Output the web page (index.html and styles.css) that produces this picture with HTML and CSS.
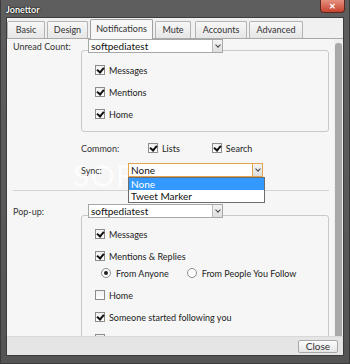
FILE: index.html
```html
<!DOCTYPE html>
<html lang="en">
<head>
  <meta charset="UTF-8">
  <title>Jonettor – Notifications</title>
  <link rel="stylesheet" href="styles.css">
</head>
<body>

<div class="window">
  <div class="titlebar">
    <span class="title">Jonettor</span>
    <span class="close-x">✕</span>
  </div>

  <div class="frame">
    <div class="tabs">
      <span class="tab tab-basic">Basic</span>
      <span class="tab tab-design">Design</span>
      <span class="tab tab-notif active">Notifications</span>
      <span class="tab tab-mute">Mute</span>
      <span class="tab tab-accounts">Accounts</span>
      <span class="tab tab-advanced">Advanced</span>
    </div>

    <div class="panel">
      <div class="scroll">

        <div class="watermark">SOFTPEDIA<sup>®</sup></div>

        <div class="row">
          <span class="label">Unread Count:</span>
          <div class="select"><span class="value">softpediatest</span><span class="arrow"></span></div>
        </div>
        <div class="group group-unread">
          <div class="item"><span class="cb checked"></span>Messages</div>
          <div class="item"><span class="cb checked"></span>Mentions</div>
          <div class="item"><span class="cb checked"></span>Home</div>
        </div>

        <div class="row sub common">
          <span class="label short">Common:</span>
          <span class="inline"><span class="cb checked"></span>Lists</span>
          <span class="inline"><span class="cb checked"></span>Search</span>
        </div>

        <div class="row sub sync">
          <span class="label tiny">Sync:</span>
          <div class="select focused">
            <span class="value">None</span><span class="arrow"></span>
            <div class="droplist">
              <div class="opt selected">None</div>
              <div class="opt">Tweet Marker</div>
            </div>
          </div>
        </div>

        <div class="separator"></div>

        <div class="row">
          <span class="label">Pop-up:</span>
          <div class="select"><span class="value">softpediatest</span><span class="arrow"></span></div>
        </div>
        <div class="group group-popup">
          <div class="item"><span class="cb checked"></span>Messages</div>
          <div class="item"><span class="cb checked"></span>Mentions &amp; Replies</div>
          <div class="radios">
            <span class="inline radio-a"><span class="rb on"></span>From Anyone</span>
            <span class="inline"><span class="rb"></span>From People You Follow</span>
          </div>
          <div class="item"><span class="cb"></span>Home</div>
          <div class="item"><span class="cb checked"></span>Someone started following you</div>
          <div class="item"><span class="cb checked"></span>Your tweet has been retweeted or favorited</div>
        </div>
      </div>
      <div class="scrollbar"><div class="thumb"></div></div>
    </div>

    <div class="footer">
      <span class="button">Close</span>
    </div>
  </div>
</div>

</body>
</html>
```

FILE: styles.css
```css
body {
  margin: 0;
  font-family: Lato, "Open Sans", sans-serif;
  font-size: 9px;
  color: #222;
}
.window {
  width: 350px;
  height: 364px;
  box-sizing: border-box;
  padding: 0 5px 7px 5px;
  background: linear-gradient(to bottom, #5e5e5e, #545454);
  display: flex;
  flex-direction: column;
  border: 1px solid #3a3a3a;
  border-top: none;
}
.titlebar {
  height: 17px;
  flex: none;
  display: flex;
  align-items: flex-start;
  justify-content: space-between;
}
.title {
  margin-top: 4px;
  color: #fff;
  font-weight: bold;
  font-size: 9px;
  text-shadow: 0 0 2px #000, 0 0 1px #000;
}
.close-x {
  width: 25px;
  height: 13px;
  margin-right: -1px;
  border-radius: 0 0 4px 4px;
  background: linear-gradient(to bottom, #e6907f, #c8432f);
  border: 1px solid #5a2a22;
  border-top: none;
  color: #fff;
  font-size: 8px;
  font-weight: bold;
  text-align: center;
  line-height: 12px;
  box-sizing: border-box;
}
.frame {
  flex: 1;
  display: flex;
  flex-direction: column;
  border: 1px solid #3c3c3c;
  background: #f0f0f0;
  min-height: 0;
}

/* tabs */
.tabs {
  height: 20px;
  flex: none;
  display: flex;
  align-items: flex-end;
  border-bottom: 1px solid #a9a9a9;
  background: #f0f0f0;
}
.tab {
  height: 17px;
  box-sizing: border-box;
  margin-right: 2px;
  border: 1px solid #b3b3b3;
  border-bottom: none;
  border-radius: 2px 2px 0 0;
  background: linear-gradient(to bottom, #f7f7f7, #e6e6e6);
  color: #333;
  text-align: center;
  line-height: 16px;
}
.tab-basic { width: 38px; }
.tab-design { width: 41px; }
.tab-notif { width: 63px; }
.tab-mute { width: 36px; }
.tab-accounts { width: 52px; margin-left: 2px; }
.tab-advanced { width: 54px; }
.tab.active {
  height: 20px;
  background: #f7f7f7;
  margin-bottom: -1px;
  border-color: #a0a0a0;
  line-height: 18px;
}

/* panel */
.panel {
  flex: 1;
  display: flex;
  min-height: 0;
  background: #f6f6f6;
}
.scroll {
  flex: 1;
  overflow: hidden;
  position: relative;
  padding: 0 0 0 6px;
}
.scrollbar {
  width: 9px;
  flex: none;
  background: #efefef;
  padding: 4px 1px 0 0;
  box-sizing: border-box;
}
.thumb {
  height: 100%;
  background: #a9a9a9;
  border-radius: 3px 3px 0 0;
  margin-left: 1px;
}

.row {
  display: flex;
  align-items: center;
  height: 14px;
  position: relative;
  z-index: 1;
}
.label {
  width: 75px;
  flex: none;
  color: #333;
}
.sub { margin-left: 68px; }
.common { margin-top: 9px; }
.sync { margin-top: 8px; z-index: 2; }
.label.short { width: 67px; }
.label.tiny { width: 47px; }

.select {
  position: relative;
  width: 135px;
  height: 14px;
  box-sizing: border-box;
  border: 1px solid #a7a7a7;
  background: #fff;
  display: flex;
  align-items: center;
  justify-content: space-between;
  font-size: 10px;
}
.select .value { padding-left: 2px; color: #111; }
.select .arrow {
  width: 10px;
  height: 12px;
  box-sizing: border-box;
  border-left: 1px solid #b9b9b9;
  background: linear-gradient(to bottom, #f4f4f4, #dedede);
  position: relative;
}
.select .arrow::after {
  content: "";
  position: absolute;
  left: 3px;
  top: 3px;
  width: 3px;
  height: 3px;
  border-right: 1px solid #444;
  border-bottom: 1px solid #444;
  transform: rotate(45deg);
}
.select.focused { border-color: #e3a34f; }
.select.focused .arrow { border-left-color: #e3a34f; }
.droplist {
  position: absolute;
  left: -1px;
  top: 13px;
  width: 135px;
  border: 1px solid #6d6d6d;
  background: #fff;
}
.opt {
  height: 12px;
  line-height: 12px;
  padding-left: 2px;
  color: #111;
}
.opt.selected {
  background: #3399ff;
  color: #fff;
}

.group {
  position: relative;
  margin-left: 68px;
  width: 248px;
  box-sizing: border-box;
  border: 1px solid #c9c9c9;
  border-radius: 3px;
  padding-left: 13px;
}
.group-unread {
  margin-top: -3px;
  height: 82px;
  padding-top: 8px;
}
.group-popup {
  margin-top: -3px;
  padding-top: 7px;
  height: 200px;
}
.item {
  height: 22px;
  display: flex;
  align-items: center;
  white-space: nowrap;
}
.inline {
  display: inline-flex;
  align-items: center;
  margin-right: 32px;
  white-space: nowrap;
  flex: none;
}
.radios {
  height: 12px;
  margin-bottom: 5px;
  display: flex;
  align-items: center;
  padding-left: 6px;
  white-space: nowrap;
}
.radio-a { margin-right: 18px; }

.cb {
  width: 10px;
  height: 10px;
  box-sizing: border-box;
  border: 1px solid #8c8c8c;
  background: linear-gradient(to bottom, #f0f0f0, #fff);
  margin-right: 4px;
  position: relative;
  flex: none;
}
.cb.checked::after {
  content: "";
  position: absolute;
  left: 2px;
  top: 0;
  width: 3px;
  height: 5px;
  border-right: 2px solid #111;
  border-bottom: 2px solid #111;
  transform: rotate(40deg);
}
.rb {
  width: 10px;
  height: 10px;
  box-sizing: border-box;
  border: 1px solid #8c8c8c;
  border-radius: 50%;
  background: #fdfdfd;
  margin-right: 5px;
  position: relative;
  flex: none;
}
.rb.on::after {
  content: "";
  position: absolute;
  left: 2px;
  top: 2px;
  width: 4px;
  height: 4px;
  border-radius: 50%;
  background: #222;
}

.separator {
  height: 1px;
  background: #d3d3d3;
  margin: 13px 0;
  width: 316px;
}

/* faint watermark behind the controls */
.watermark {
  position: absolute;
  left: 66px;
  top: 118px;
  font-size: 30px;
  font-weight: bold;
  color: rgba(255, 255, 255, 0.9);
  text-shadow: 0 0 1px rgba(0, 0, 0, 0.06);
  letter-spacing: 1px;
  pointer-events: none;
  z-index: 0;
}
.watermark sup { font-size: 10px; }

.footer {
  height: 18px;
  flex: none;
  background: #e5e5e5;
  border-top: 1px solid #d8d8d8;
  display: flex;
  justify-content: flex-end;
  align-items: center;
  padding-right: 5px;
}
.button {
  width: 40px;
  height: 13px;
  box-sizing: border-box;
  border: 1px solid #a8a8a8;
  border-radius: 2px;
  background: linear-gradient(to bottom, #fbfbfb, #e6e6e6);
  text-align: center;
  line-height: 11px;
  color: #333;
  font-size: 10px;
}
```
